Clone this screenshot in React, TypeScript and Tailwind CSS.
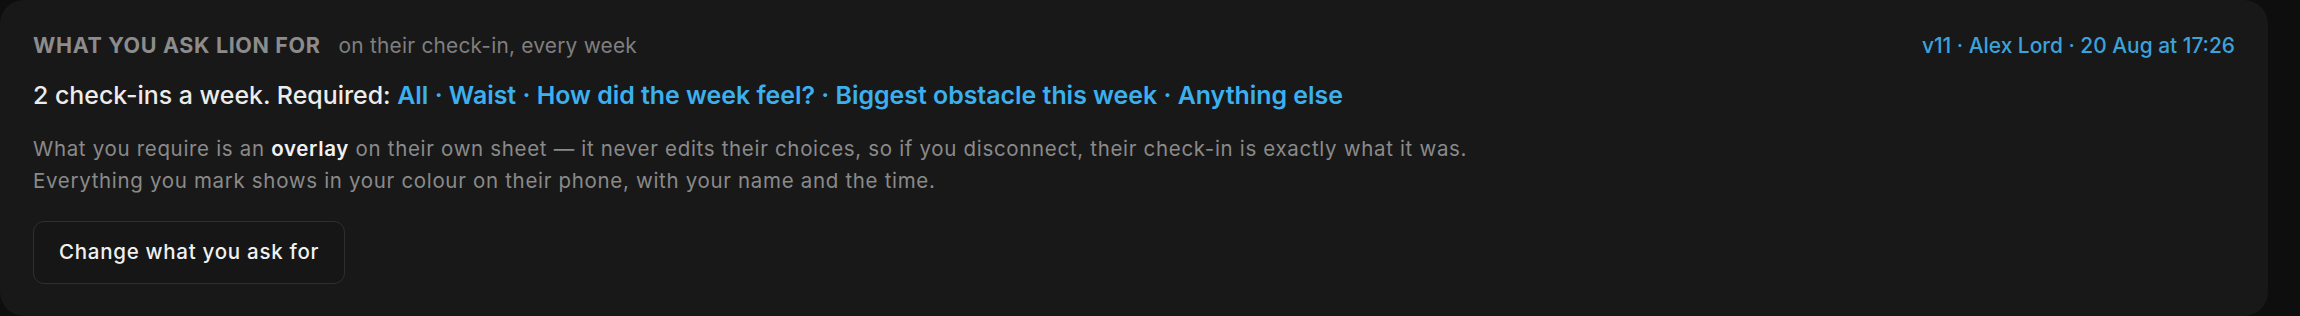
import React from "react";

export default function App() {
  const required = ["All", "Waist", "How did the week feel?", "Biggest obstacle this week", "Anything else"];
  return (
    <div className="w-[2300px] h-[316px] bg-[#0e0e0e] overflow-hidden" style={{ fontFamily: "Inter, 'Noto Sans', sans-serif" }}>
      <div className="w-[2268px] h-[316px] bg-[#181818] rounded-[24px] px-[33px] pt-[33px] flex flex-col">
        <div className="flex items-baseline justify-between">
          <div className="flex items-baseline gap-[18px]">
            <span className="text-[21.5px] leading-[24px] font-bold tracking-[0.03em] text-[#8c8c8c]">WHAT YOU ASK LION FOR</span>
            <span className="text-[20.9px] leading-[24px] tracking-[0.01em] text-[#7f7f7f]">on their check-in, every week</span>
          </div>
          <span className="text-[20.9px] leading-[24px] font-medium text-[#3ba3dc]">v11 · Alex Lord · 20 Aug at 17:26</span>
        </div>
        <div className="mt-[21px] text-[24.9px] leading-[32px] font-medium text-[#ececec]">
          2 check-ins a week. Required:{" "}
          <span className="text-[#3cb0ef] font-semibold">
            {required.join(" · ")}
          </span>
        </div>
        <div className="mt-[22px] text-[20.5px] leading-[32px] tracking-[0.033em] text-[#8a8a8a]">
          <p>
            What you require is an <span className="font-semibold text-[#f2f2f2]">overlay</span> on their own sheet — it never edits their choices, so if you disconnect, their check-in is exactly what it was.
          </p>
          <p>Everything you mark shows in your colour on their phone, with your name and the time.</p>
        </div>
        <div className="mt-[24px]">
          <button className="h-[63px] px-[25px] rounded-[11px] border border-[#2f2f2f] bg-[#161616] text-[20.5px] tracking-[0.035em] font-medium text-[#f0f0f0]">
            Change what you ask for
          </button>
        </div>
      </div>
    </div>
  );
}
